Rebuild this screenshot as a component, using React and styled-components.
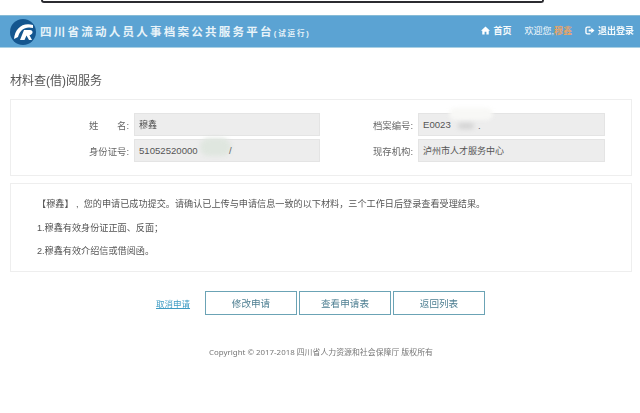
import React from 'react'
import styled, { createGlobalStyle } from 'styled-components';

const GlobalStyle = createGlobalStyle`
    html, body {
        margin: 0;
        padding: 0;
        background: #fff;
    }
    body {
        font-family: "Liberation Sans", "Noto Sans CJK SC", sans-serif;
        color: #555;
    }
`;

const Page = styled.div`
    width: 640px;
    height: 413px;
    overflow: hidden;
    filter: blur(0.35px);
`;

const PhoneEdge = styled.div`
    height: 3px;
    margin: 0 96px 12px 41px;
    box-sizing: border-box;
    background: #fff;
    border: 2px solid #2b2b30;
    border-top: 0;
    border-radius: 0 0 10px 10px;
`;

const Header = styled.header`
    display: flex;
    align-items: center;
    height: 33px;
    padding: 0 6px 2px 10px;
    background: #5ba3d3;
    border-top: 1px solid #86bbd6;
    border-bottom: 1px solid #a9d0e4;
    box-sizing: border-box;
`;

const Logo = styled.svg`
    width: 26px;
    height: 26px;
    flex: none;
    margin-top: 2px;
`;

const SiteTitle = styled.div`
    margin-left: 4px;
    font-size: 11.5px;
    font-weight: 700;
    letter-spacing: 2.25px;
    color: #e8f3f9;
    white-space: nowrap;
`;

const Trial = styled.span`
    font-size: 7.5px;
    letter-spacing: 1.9px;
`;

const Nav = styled.nav`
    display: flex;
    align-items: center;
    margin-left: auto;
    font-size: 9px;
    color: #f6fafc;
`;

const NavItem = styled.span`
    display: flex;
    align-items: center;
    gap: 3px;
    margin-left: ${p => p.$gap}px;
    font-weight: ${p => (p.$strong ? 700 : 400)};
    white-space: nowrap;
`;

const UserName = styled.span`
    font-weight: 700;
    color: #e8a468;
`;

const Heading = styled.h1`
    margin: 26px 0 0 10px;
    height: 25px;
    font-size: 12px;
    line-height: 14px;
    font-weight: 400;
    color: #555;
`;

const Panel = styled.section`
    margin: 0 8px 0 10px;
    border: 1px solid #eeeeee;
    box-sizing: border-box;
`;

const InfoPanel = styled(Panel)`
    display: grid;
    grid-template-columns: 310px 1fr;
    align-content: start;
    row-gap: 3px;
    height: 77px;
    padding-top: 13px;
    margin-bottom: 7px;
`;

const Field = styled.div`
    display: flex;
    align-items: center;
    height: 23px;
`;

const FieldLabel = styled.label`
    flex: none;
    width: ${p => p.$width}px;
    margin-right: ${p => p.$gap}px;
    text-align: right;
    font-size: 9.4px;
    color: #666;
    white-space: pre;
`;

const FieldValue = styled.div`
    position: relative;
    flex: none;
    width: ${p => p.$width}px;
    height: 23px;
    padding-left: 4px;
    box-sizing: border-box;
    background: #ededed;
    border: 1px solid #e4e4e4;
    font-size: 9px;
    line-height: 22px;
    color: #555;
    white-space: nowrap;
`;

const Code = styled.span`
    font-size: 9.6px;
`;

const Smudge = styled.div`
    position: absolute;
    left: ${p => p.$left}px;
    top: ${p => p.$top}px;
    width: ${p => p.$width}px;
    height: ${p => p.$height}px;
    border-radius: ${p => p.$height / 2}px;
    background: ${p => p.$color};
    filter: blur(2px);
`;

const StrayMark = styled.span`
    position: absolute;
    left: ${p => p.$left}px;
    top: ${p => p.$top}px;
    font-size: 9.6px;
    line-height: 21px;
    color: #666;
`;

const Notice = styled(Panel)`
    height: 89px;
    padding: 15px 0 0 26px;
    font-size: 9.15px;
    color: #555;
`;

const NoticeLine = styled.p`
    margin: 0 0 13.5px;
    height: 10px;
    line-height: 10px;
    white-space: pre;
`;

const Actions = styled.div`
    display: flex;
    align-items: center;
    margin: 19px 0 0 156px;
`;

const CancelLink = styled.a`
    width: 49px;
    font-size: 8.5px;
    color: #3f9cc4;
    text-decoration: underline;
`;

const ActionButton = styled.button`
    width: 92px;
    height: 24px;
    margin-right: 2px;
    padding: 0;
    background: #fff;
    border: 1px solid #6ba3b5;
    font-family: inherit;
    font-size: 9.6px;
    color: #4e7f92;
`;

const Footer = styled.footer`
    margin-top: 31px;
    padding-left: 209px;
    font-family: "Noto Sans", "Noto Sans CJK SC", sans-serif;
    font-size: 7.9px;
    line-height: 12px;
    color: #777;
`;

const App = () => {
    return (
        <Page>
            <GlobalStyle />
            <PhoneEdge />
            <Header>
                <Logo viewBox="0 0 26 26">
                    <circle cx="13" cy="13" r="13" fill="#14568f" />
                    <path d="M4 20 C5 10 12 3 23 6 L23 9 C15 7 10 11 8 18 Z" fill="#fff" />
                    <path d="M10 21 L14 11 L20 11 C23.5 11 23.5 15.5 19.5 16.2 L22 21 L19 21 L16.5 16.5 L14.5 21 Z" fill="#fff" />
                </Logo>
                <SiteTitle>四川省流动人员人事档案公共服务平台<Trial>(试运行)</Trial></SiteTitle>
                <Nav>
                    <NavItem $strong>
                        <svg width="9" height="9" viewBox="0 0 10 10"><path d="M5 .5 L10 5.2 H8.6 V9.5 H6 V6.5 H4 V9.5 H1.4 V5.2 H0 Z" fill="#fff" /></svg>
                        首页
                    </NavItem>
                    <NavItem $gap={13}><span>欢迎您,<UserName>穆鑫</UserName></span></NavItem>
                    <NavItem $gap={13} $strong>
                        <svg width="10" height="9" viewBox="0 0 11 10"><path d="M6 1.2 H2.5 Q1 1.2 1 2.7 V7.3 Q1 8.8 2.5 8.8 H6" fill="none" stroke="#fff" strokeWidth="1.5" /><path d="M4 4 H7 V2 L10.5 5 L7 8 V6 H4 Z" fill="#fff" /></svg>
                        退出登录
                    </NavItem>
                </Nav>
            </Header>
            <Heading>材料查(借)阅服务</Heading>
            <InfoPanel>
                <Field>
                    <FieldLabel $width={118} $gap={5}>姓　　名:</FieldLabel>
                    <FieldValue $width={186}>穆鑫</FieldValue>
                </Field>
                <Field>
                    <FieldLabel $width={92} $gap={5}>档案编号:</FieldLabel>
                    <FieldValue $width={187}>
                        <Code>E0023</Code>
                        <Smudge $left={30} $top={-6} $width={44} $height={12} $color="#f8f8f6" />
                        <Smudge $left={39} $top={9} $width={16} $height={6} $color="#d4d4d4" />
                        <StrayMark $left={59} $top={1}>.</StrayMark>
                    </FieldValue>
                </Field>
                <Field>
                    <FieldLabel $width={118} $gap={5}>身份证号:</FieldLabel>
                    <FieldValue $width={186}>
                        <Code>51052520000</Code>
                        <Smudge $left={65} $top={-2} $width={31} $height={18} $color="#dfe6df" />
                        <StrayMark $left={94} $top={0}>/</StrayMark>
                    </FieldValue>
                </Field>
                <Field>
                    <FieldLabel $width={92} $gap={5}>现存机构:</FieldLabel>
                    <FieldValue $width={187}>泸州市人才服务中心</FieldValue>
                </Field>
            </InfoPanel>
            <Notice>
                <NoticeLine>【穆鑫】 ,  您的申请已成功提交。请确认已上传与申请信息一致的以下材料，三个工作日后登录查看受理结果。</NoticeLine>
                <NoticeLine>1.穆鑫有效身份证正面、反面；</NoticeLine>
                <NoticeLine>2.穆鑫有效介绍信或借阅函。</NoticeLine>
            </Notice>
            <Actions>
                <CancelLink href="#">取消申请</CancelLink>
                <ActionButton>修改申请</ActionButton>
                <ActionButton>查看申请表</ActionButton>
                <ActionButton>返回列表</ActionButton>
            </Actions>
            <Footer>Copyright © 2017-2018 四川省人力资源和社会保障厅 版权所有</Footer>
        </Page>
    )
}

export default App;
